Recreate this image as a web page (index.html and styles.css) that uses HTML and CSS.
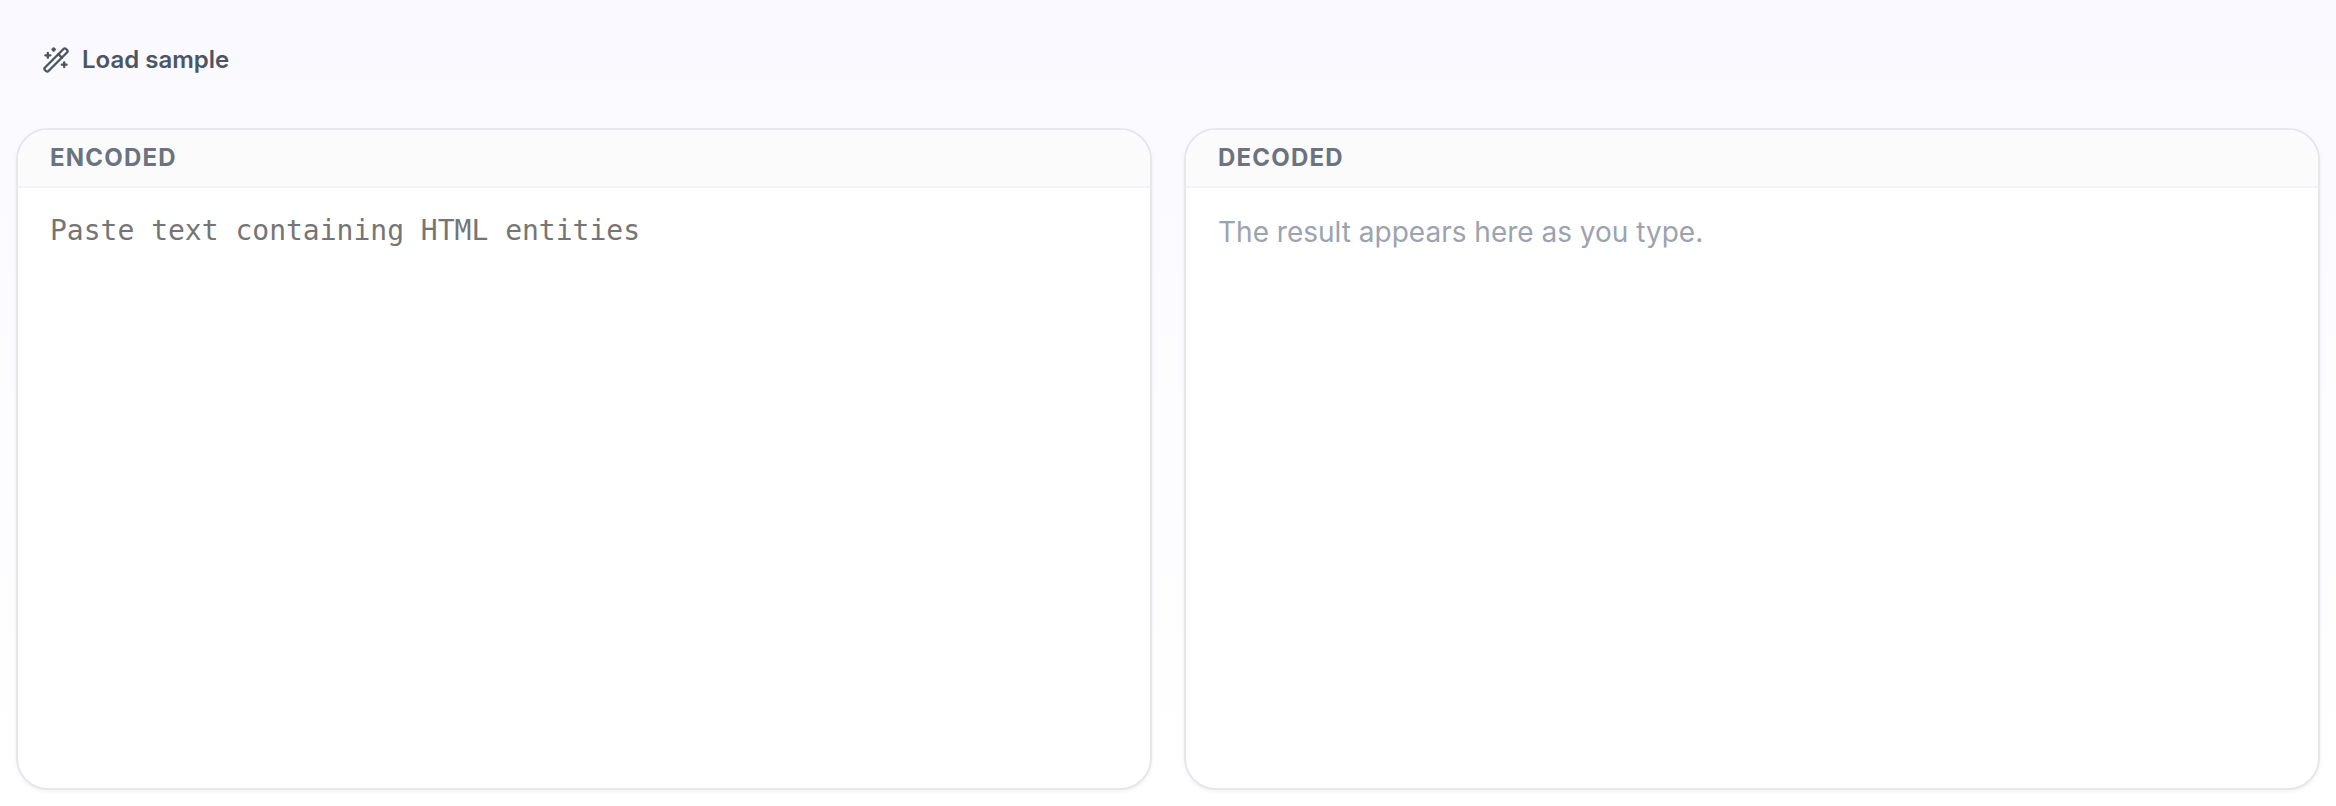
FILE: index.html
```html
<!DOCTYPE html>
<html lang="en">
<head>
<meta charset="utf-8">
<meta name="viewport" content="width=device-width, initial-scale=1">
<title>HTML entity decoder</title>
<link rel="stylesheet" href="styles.css">
</head>
<body>
<main class="tool">
  <div class="toolbar">
    <button class="sample-button" type="button">
      <svg class="icon" viewBox="0 0 24 24" aria-hidden="true">
        <path d="m21.64 3.64-1.28-1.28a1.21 1.21 0 0 0-1.72 0L2.36 18.64a1.21 1.21 0 0 0 0 1.72l1.28 1.28a1.2 1.2 0 0 0 1.72 0L21.64 5.36a1.2 1.2 0 0 0 0-1.72"/>
        <path d="m14 7 3 3"/>
        <path d="M5 6v4"/>
        <path d="M19 14v4"/>
        <path d="M10 2v2"/>
        <path d="M7 8H3"/>
        <path d="M21 16h-4"/>
        <path d="M11 3H9"/>
      </svg>
      Load sample
    </button>
  </div>
  <div class="panels">
    <section class="panel">
      <label class="panel-title" for="encoded">Encoded</label>
      <textarea class="encoded-input" id="encoded" placeholder="Paste text containing HTML entities" spellcheck="false"></textarea>
    </section>
    <section class="panel" aria-labelledby="decoded-title">
      <h2 class="panel-title" id="decoded-title">Decoded</h2>
      <p class="result">The result appears here as you type.</p>
    </section>
  </div>
</main>
</body>
</html>
```

FILE: styles.css
```css
* {
  box-sizing: border-box;
}

body {
  margin: 0;
  font-family: Inter, sans-serif;
  background: #ffffff;
}

.tool {
  display: flex;
  flex-direction: column;
  gap: 32px;
  min-height: 100vh;
  padding: 24px 16px 16px;
  background: linear-gradient(#faf9ff, #ffffff);
}

.toolbar {
  display: flex;
}

.sample-button {
  display: flex;
  align-items: center;
  gap: 12px;
  padding: 18px 24px;
  border: 2px solid transparent;
  border-radius: 16px;
  background: transparent;
  color: #4b5563;
  font: 600 24px/32px Inter, sans-serif;
  cursor: pointer;
}

.icon {
  width: 28px;
  height: 28px;
  fill: none;
  stroke: currentColor;
  stroke-width: 2;
  stroke-linecap: round;
  stroke-linejoin: round;
}

.panels {
  display: grid;
  grid-template-columns: 1fr 1fr;
  gap: 32px;
  flex: 1;
}

.panel {
  display: flex;
  flex-direction: column;
  overflow: hidden;
  border: 2px solid #e5e7eb;
  border-radius: 32px;
  background: #ffffff;
  box-shadow: 0 2px 4px rgba(0, 0, 0, 0.05);
}

.panel-title {
  margin: 0;
  padding: 12px 32px;
  border-bottom: 2px solid #f3f4f6;
  background: #fbfbfc;
  color: #6b7280;
  font-size: 24px;
  font-weight: 700;
  line-height: 32px;
  letter-spacing: 0.05em;
  text-transform: uppercase;
}

.encoded-input {
  flex: 1;
  padding: 20px 32px;
  border: 0;
  outline: 0;
  resize: none;
  background: transparent;
  color: #1f2937;
  font: 28px/46px "DejaVu Sans Mono", monospace;
}

.encoded-input::placeholder {
  color: #757575;
}

.result {
  margin: 0;
  padding: 22px 32px;
  color: #9ca3af;
  font-size: 28px;
  line-height: 44px;
}
```
